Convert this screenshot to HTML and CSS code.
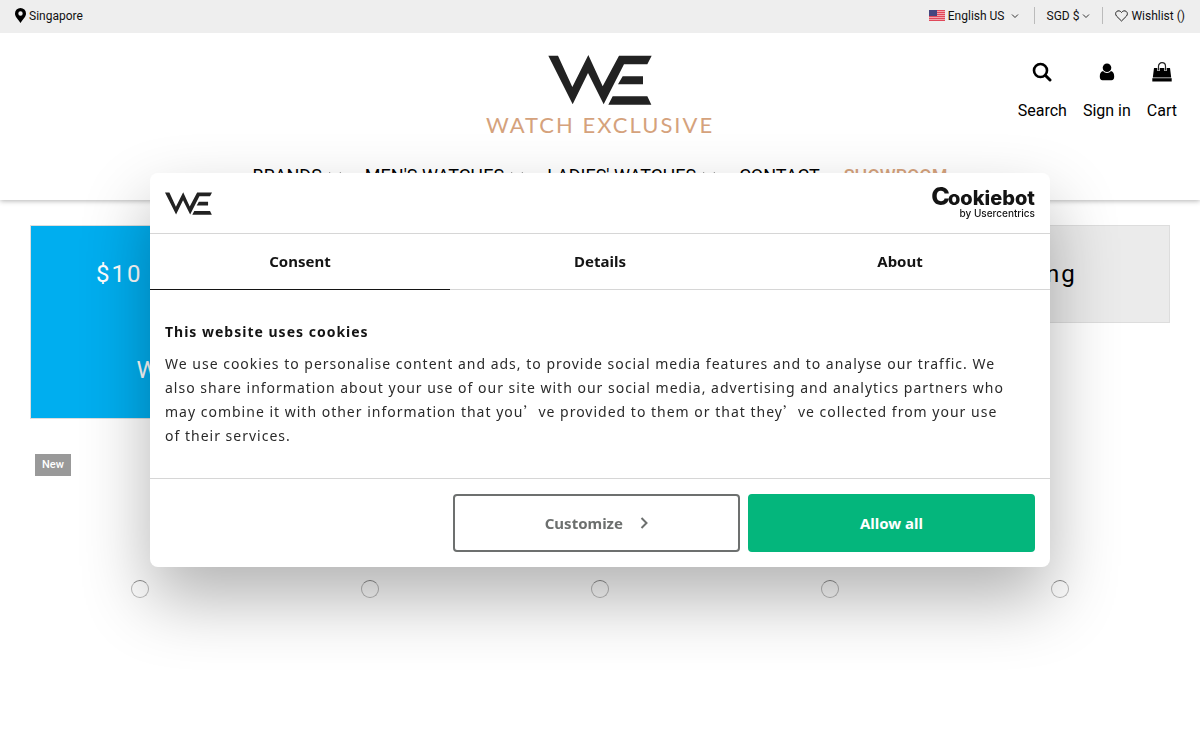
FILE: index.html
```html
<!DOCTYPE html>
<html lang="en">
<head>
  <meta charset="UTF-8"/>
  <meta name="viewport" content="width=device-width, initial-scale=1.0"/>
  <title>Watch Exclusive</title>
  <link rel="stylesheet" href="styles.css">
</head>
<body>
<svg class="sprite" aria-hidden="true">
  <symbol id="we" viewBox="235 44 310 150">
    <path d="M235 46h29l43 94 48-96 43 94 49-92h98l-13 26h-70l-61 120-47-94-46 94zM458 108h61v24h-75zM428 168h104l12 25H415z"/>
  </symbol>
  <symbol id="chevron" viewBox="0 0 8 8">
    <path d="M1 2.500l3 3 3-3" fill="none" stroke="currentColor"/>
  </symbol>
</svg>

<div class="topbar">
  <a class="store" href="#">
    <svg width="11" height="15" viewBox="0 0 11 15"><path fill-rule="evenodd" d="M5.500 0A5.500 5.500 0 0 1 11 5.500C11 8 9.500 9.500 5.500 15 1.500 9.500 0 8 0 5.500A5.500 5.500 0 0 1 5.500 0zm0 3.300a2.200 2.200 0 1 0 0 4.400 2.200 2.200 0 0 0 0-4.400z"/></svg>
    Singapore
  </a>
  <div class="topbar_right">
    <button class="top_btn" type="button">
      <svg width="16" height="11" viewBox="0 0 16 11">
        <path fill="#f3a5ac" d="M0 0h16v11H0z"/>
        <path fill="none" stroke="#e0485a" d="M0 .5h16M0 2.500h16M0 4.500h16M0 6.500h16M0 8.500h16M0 10.500h16"/>
        <path fill="#46467f" d="M0 0h8v6H0z"/>
      </svg>
      English US
      <svg class="chevron chevron_far" width="8" height="8"><use href="#chevron"/></svg>
    </button>
    <button class="top_btn" type="button">
      SGD $
      <svg class="chevron" width="8" height="8"><use href="#chevron"/></svg>
    </button>
    <a class="top_btn" href="#">
      <svg width="13" height="12" viewBox="0 0 13 12"><path fill="none" stroke="#222" d="M6.500 11L1.600 6.200C.2 4.500.4 2.500 1.700 1.500c1.500-1.200 3.600-.8 4.800 1 1.200-1.800 3.300-2.200 4.800-1 1.300 1 1.500 3 .1 4.700z"/></svg>
      Wishlist ()
    </a>
  </div>
</div>

<header class="header">
  <div class="header_main">
    <a class="logo" href="#">
      <svg width="104" height="50"><use href="#we"/></svg>
      <span>WATCH EXCLUSIVE</span>
    </a>
    <div class="user_links">
      <a href="#">
        <svg width="20" height="20" viewBox="0 0 20 20"><circle cx="8.500" cy="8.500" r="6.500" fill="none" stroke="#000" stroke-width="2.600"/><path d="M13.500 13.500l4.500 4.500" stroke="#000" stroke-width="3" stroke-linecap="round"/></svg>
        Search
      </a>
      <a href="#">
        <svg width="20" height="20" viewBox="0 0 20 20"><circle cx="10" cy="5.800" r="4.300"/><path d="M6 9c1 1.300 2.400 2 4 2s3-.7 4-2c2.300.4 3.200 2.800 3.200 5.500 0 2.500-1 3.700-2.700 3.700h-9c-1.700 0-2.700-1.200-2.700-3.700C2.800 11.800 3.700 9.400 6 9z"/></svg>
        Sign in
      </a>
      <a href="#">
        <svg width="20" height="20" viewBox="0 0 20 20"><path d="M2 6h16l1.200 9.500H.8z"/><path d="M.3 16.200h19.400V19.500H.3z"/><path d="M6.500 9V4.500a3.500 3.500 0 0 1 7 0V9" fill="none" stroke="#fff" stroke-width="2.400"/><path d="M6.500 8.500V4.200a3.500 3.500 0 0 1 7 0V8.500" fill="none" stroke="#222" stroke-width="1.200"/></svg>
        Cart
      </a>
    </div>
  </div>
  <nav class="nav">
    <a href="#">BRANDS <svg class="chevron" width="16" height="16"><use href="#chevron"/></svg></a>
    <a href="#">MEN'S WATCHES <svg class="chevron" width="16" height="16"><use href="#chevron"/></svg></a>
    <a href="#">LADIES' WATCHES <svg class="chevron" width="16" height="16"><use href="#chevron"/></svg></a>
    <a href="#">CONTACT</a>
    <a class="showroom" href="#">SHOWROOM</a>
  </nav>
</header>

<main>
  <div class="banners">
    <div class="banner banner_blue">
      <p>$10 off first orders!</p>
      <p>&nbsp;</p>
      <p>WELCOME 10</p>
    </div>
    <div class="banner banner_grey">
      <p>Secure Payment</p>
    </div>
    <div class="banner banner_grey">
      <p>Island Shipping</p>
    </div>
  </div>
  <div class="products">
    <div class="product"><span class="badge">New</span><span class="loader"></span></div>
    <div class="product"><span class="loader"></span></div>
    <div class="product"><span class="loader"></span></div>
    <div class="product"><span class="loader"></span></div>
    <div class="product"><span class="loader"></span></div>
  </div>
</main>

<div class="cookie" role="dialog" aria-labelledby="cookie_title">
  <div class="cookie_header">
    <svg width="47" height="23"><use href="#we"/></svg>
    <a class="cookiebot" href="#">
      <span class="cookiebot_name"><span class="big_c">C</span>ookiebot</span>
      <span class="cookiebot_by">by Usercentrics</span>
    </a>
  </div>
  <div class="cookie_tabs" role="tablist">
    <button class="tab active" type="button" role="tab" aria-selected="true">Consent</button>
    <button class="tab" type="button" role="tab" aria-selected="false">Details</button>
    <button class="tab" type="button" role="tab" aria-selected="false">About</button>
  </div>
  <div class="cookie_body">
    <h2 id="cookie_title">This website uses cookies</h2>
    <p>We use cookies to personalise content and ads, to provide social media features and to analyse our traffic. We also share information about your use of our site with our social media, advertising and analytics partners who may combine it with other information that you<span class="wide">’</span>ve provided to them or that they<span class="wide">’</span>ve collected from your use of their services.</p>
  </div>
  <div class="cookie_footer">
    <button class="btn" type="button">Customize
      <svg width="8" height="12" viewBox="0 0 8 12"><path d="M1.500 1l5 5-5 5" fill="none" stroke="currentColor" stroke-width="2"/></svg>
    </button>
    <button class="btn btn_allow" type="button">Allow all</button>
  </div>
</div>
</body>
</html>
```
FILE: styles.css
```css
* {
    box-sizing: border-box;
}

body {
    margin: 0;
    background-color: #fff;
    color: #000;
    font-family: Roboto, "Liberation Sans", sans-serif;
    font-size: 16px;
}

a {
    color: inherit;
    text-decoration: none;
}

p, h2 {
    margin: 0;
}

button {
    padding: 0;
    border: 0;
    background: none;
    color: inherit;
    font: inherit;
    cursor: pointer;
}

.sprite {
    display: none;
}

.chevron {
    color: #333;
}

.topbar {
    position: relative;
    z-index: 1;
    display: flex;
    justify-content: space-between;
    align-items: center;
    height: 33px;
    padding: 0 15px 2px;
    background-color: #eee;
    color: #111;
    font-size: 12px;
}

.store {
    display: flex;
    align-items: center;
    gap: 3px;
}

.topbar_right {
    display: flex;
    align-items: center;
}

.top_btn {
    display: flex;
    align-items: center;
    gap: 3px;
    height: 17px;
    padding: 0 12px;
    border-left: 1px solid #bbb;
}

.top_btn:first-child {
    padding-right: 15px;
    border-left: 0;
}

.top_btn:last-child {
    padding-right: 0;
}

.chevron_far {
    margin-left: 3px;
}

.header {
    position: relative;
    padding: 22px 23px 12px;
    box-shadow: 0 1px 5px rgba(0, 0, 0, 0.3);
}

.header_main {
    display: grid;
    grid-template-columns: 1fr auto 1fr;
}

.logo {
    grid-column: 2;
    display: flex;
    flex-direction: column;
    align-items: center;
    gap: 7px;
    fill: #222;
    color: #d5a27c;
    font-family: Lato, sans-serif;
    font-size: 22px;
    line-height: 26px;
    letter-spacing: 2px;
}

.user_links {
    display: flex;
    justify-content: flex-end;
    gap: 16px;
    padding-top: 7px;
}

.user_links a {
    display: flex;
    flex-direction: column;
    align-items: center;
    gap: 19px;
    line-height: 20px;
}

.nav {
    display: flex;
    justify-content: center;
    gap: 24px;
    padding-top: 26px;
    font-size: 18px;
    line-height: 24px;
}

.nav a {
    display: flex;
    align-items: center;
    gap: 5px;
}

.nav .chevron {
    margin-right: -2px;
}

.showroom {
    color: #d5a27c;
    font-weight: 500;
}

.banners {
    display: grid;
    grid-template-columns: repeat(3, 1fr);
    align-items: start;
    padding: 25px 30px 0;
}

.banner {
    padding: 24px;
    border: 1px solid #ddd;
    font-size: 24px;
    line-height: 48px;
    letter-spacing: 2px;
    text-align: center;
}

.banner_blue {
    background-color: #00aeef;
    color: #fff;
}

.banner_grey {
    background-color: #ebebeb;
}

.products {
    display: grid;
    grid-template-columns: repeat(5, 1fr);
    padding: 35px 25px 0;
}

.product {
    position: relative;
    display: flex;
    align-items: center;
    justify-content: center;
    height: 270px;
}

.badge {
    position: absolute;
    top: 0;
    left: 10px;
    padding: 0 7px;
    background-color: #999;
    color: #fff;
    font-size: 11px;
    font-weight: 500;
    line-height: 22px;
}

.loader {
    width: 18px;
    height: 18px;
    border: 1px solid #bbb;
    border-top-color: #888;
    border-radius: 50%;
}

.cookie {
    position: fixed;
    z-index: 2;
    inset: 0;
    width: 75%;
    max-width: 900px;
    height: fit-content;
    margin: auto;
    border-radius: 8px;
    background-color: #fff;
    color: #141414;
    box-shadow: 0 32px 68px rgba(0, 0, 0, 0.3);
    font-family: "Noto Sans", "Open Sans", sans-serif;
    font-size: 15px;
    line-height: 24px;
}

.cookie_header {
    display: flex;
    align-items: center;
    justify-content: space-between;
    height: 61px;
    padding: 0 15px;
    border-bottom: 1px solid #d6d6d6;
    fill: #222;
}

.cookiebot {
    display: flex;
    flex-direction: column;
    align-items: flex-end;
    font-family: Inter, sans-serif;
}

.cookiebot_name {
    font-size: 20px;
    font-weight: 800;
    line-height: 18px;
}

.big_c {
    margin-right: -2px;
    font-size: 25px;
}

.cookiebot_by {
    font-size: 10px;
    font-weight: 500;
    line-height: 12px;
}

.cookie_tabs {
    display: flex;
}

.tab {
    flex: 1;
    height: 56px;
    padding-bottom: 2px;
    border-bottom: 1px solid #d6d6d6;
    font-weight: 700;
}

.tab.active {
    border-bottom-color: #141414;
}

.cookie_body {
    padding: 30px 40px 30px 15px;
    font-size: 14px;
    letter-spacing: 1px;
}

.cookie_body h2 {
    margin-bottom: 8px;
    font-size: 14px;
    font-weight: 700;
}

.cookie_body p {
    color: #2a2a2a;
}

.wide {
    font-family: "Noto Sans CJK SC", sans-serif;
    line-height: 1;
}

.cookie_footer {
    display: flex;
    justify-content: flex-end;
    gap: 8px;
    padding: 15px;
    border-top: 1px solid #d6d6d6;
}

.btn {
    display: flex;
    align-items: center;
    justify-content: center;
    gap: 17px;
    width: 33%;
    height: 58px;
    border: 2px solid #6d706f;
    border-radius: 4px;
    color: #6d706f;
    font-weight: 700;
}

.btn_allow {
    border-color: #04b67c;
    background-color: #04b67c;
    color: #fff;
}
```
